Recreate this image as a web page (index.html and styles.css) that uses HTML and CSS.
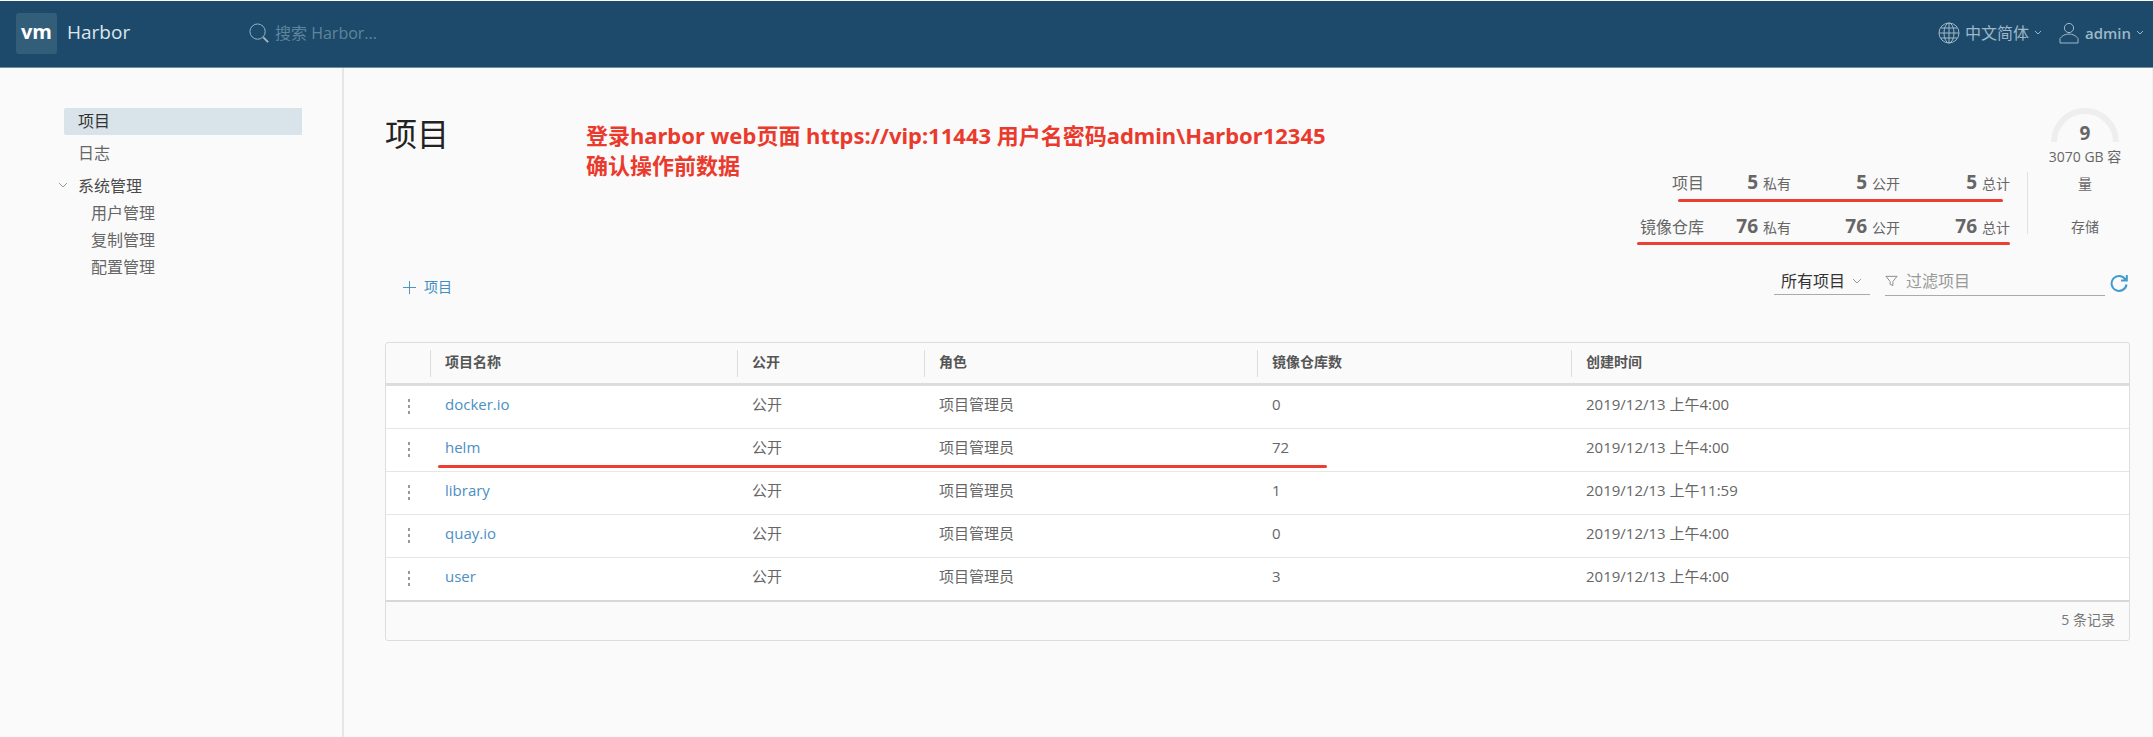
FILE: index.html
```html
<!DOCTYPE html>
<html lang="zh-CN">
<head>
<meta charset="utf-8">
<title>Harbor</title>
<link rel="stylesheet" href="styles.css">
</head>
<body>
<header class="header">
  <a class="brand" href="#"><span class="logo">vm</span><span class="brand-name">Harbor</span></a>
  <form class="search">
    <svg class="search-icon" viewBox="0 0 22 22" aria-hidden="true"><circle cx="9" cy="9" r="8"/><path d="M15 15l5 5" stroke-width="2"/></svg>
    <input class="search-input" type="search" placeholder="搜索 Harbor..." aria-label="搜索 Harbor">
  </form>
  <div class="header-actions">
    <button class="header-button" type="button">
      <svg class="header-icon" viewBox="0 0 22 22" aria-hidden="true"><circle cx="11" cy="11" r="10"/><ellipse cx="11" cy="11" rx="5" ry="10"/><path d="M11 1v20M1 11h20M3 6h16M3 16h16"/></svg>
      <span>中文简体</span>
      <svg class="caret" viewBox="0 0 8 6" aria-hidden="true"><path d="M1 1l3 3 3-3"/></svg>
    </button>
    <button class="header-button" type="button">
      <svg class="header-icon" viewBox="0 0 22 22" aria-hidden="true"><circle cx="11" cy="6" r="4.6"/><path d="M2 21v-4.500c2-3 5.500-4.500 9-4.500s7 1.500 9 4.500v4.500z"/></svg>
      <span class="user-name">admin</span>
      <svg class="caret" viewBox="0 0 8 6" aria-hidden="true"><path d="M1 1l3 3 3-3"/></svg>
    </button>
  </div>
</header>
<div class="layout">
  <nav class="sidebar">
    <a class="nav-item nav-active" href="#">项目</a>
    <a class="nav-item" href="#">日志</a>
    <div class="nav-group">
      <button class="nav-toggle" type="button"><svg class="nav-caret" viewBox="0 0 10 7" aria-hidden="true"><path d="M1 1l4 4 4-4"/></svg>系统管理</button>
      <a class="nav-sub" href="#">用户管理</a>
      <a class="nav-sub" href="#">复制管理</a>
      <a class="nav-sub" href="#">配置管理</a>
    </div>
  </nav>
  <main class="content">
    <div class="summary">
      <h1 class="title">项目</h1>
      <p class="note">登录harbor web页面 https://vip:11443 用户名密码admin\Harbor12345<br>确认操作前数据</p>
      <div class="stats">
        <div class="stat-row">
          <span class="stat-label">项目</span>
          <span class="stat"><b>5</b>私有</span>
          <span class="stat"><b>5</b>公开</span>
          <span class="stat"><b>5</b>总计</span>
          <span class="mark mark-projects"></span>
        </div>
        <div class="stat-row">
          <span class="stat-label">镜像仓库</span>
          <span class="stat"><b>76</b>私有</span>
          <span class="stat"><b>76</b>公开</span>
          <span class="stat"><b>76</b>总计</span>
          <span class="mark mark-repos"></span>
        </div>
      </div>
      <div class="divider"></div>
      <div class="storage">
        <div class="gauge">
          <svg class="gauge-arc" viewBox="0 0 68 34" aria-hidden="true"><path d="M3 34a31 31 0 0 1 62 0"/></svg>
          <b class="gauge-value">9</b>
        </div>
        <div class="capacity">3070 GB 容量</div>
        <div class="storage-label">存储</div>
      </div>
    </div>
    <div class="toolbar">
      <button class="add" type="button"><svg class="plus" viewBox="0 0 14 14" aria-hidden="true"><path d="M7 0v14M0 7h14"/></svg>项目</button>
      <div class="filters">
        <div class="select-wrap">
          <select class="select" aria-label="项目类型"><option>所有项目</option></select>
          <svg class="select-caret" viewBox="0 0 10 7" aria-hidden="true"><path d="M1 1l4 4 4-4"/></svg>
        </div>
        <div class="filter">
          <svg class="funnel" viewBox="0 0 14 12" aria-hidden="true"><path d="M1 1h12L8.500 6.500V11L5.500 9.500v-3z"/></svg>
          <input class="filter-input" type="text" placeholder="过滤项目" aria-label="过滤项目">
        </div>
        <button class="refresh" type="button" aria-label="刷新"><svg class="refresh-icon" viewBox="0 0 18 18" aria-hidden="true"><path d="M15.500 5.500A7.500 7.500 0 1 0 16.500 10.500M11 6.500h5.800V1"/></svg></button>
      </div>
    </div>
    <div class="datagrid">
      <table class="table">
        <colgroup><col class="c-menu"><col class="c-name"><col class="c-public"><col class="c-role"><col class="c-repos"><col class="c-time"></colgroup>
        <thead>
          <tr><th></th><th>项目名称</th><th>公开</th><th>角色</th><th>镜像仓库数</th><th>创建时间</th></tr>
        </thead>
        <tbody>
          <tr><td><button class="kebab" type="button" aria-label="操作"><i></i><i></i><i></i></button></td><td><a href="#">docker.io</a></td><td>公开</td><td>项目管理员</td><td>0</td><td>2019/12/13 上午4:00</td></tr>
          <tr><td><button class="kebab" type="button" aria-label="操作"><i></i><i></i><i></i></button></td><td><a href="#">helm</a></td><td>公开</td><td>项目管理员</td><td>72</td><td>2019/12/13 上午4:00</td></tr>
          <tr><td><button class="kebab" type="button" aria-label="操作"><i></i><i></i><i></i></button></td><td><a href="#">library</a></td><td>公开</td><td>项目管理员</td><td>1</td><td>2019/12/13 上午11:59</td></tr>
          <tr><td><button class="kebab" type="button" aria-label="操作"><i></i><i></i><i></i></button></td><td><a href="#">quay.io</a></td><td>公开</td><td>项目管理员</td><td>0</td><td>2019/12/13 上午4:00</td></tr>
          <tr><td><button class="kebab" type="button" aria-label="操作"><i></i><i></i><i></i></button></td><td><a href="#">user</a></td><td>公开</td><td>项目管理员</td><td>3</td><td>2019/12/13 上午4:00</td></tr>
        </tbody>
      </table>
      <div class="grid-footer">5 条记录</div>
      <span class="mark mark-helm"></span>
    </div>
  </main>
</div>
</body>
</html>
```
FILE: styles.css
```css
* { box-sizing: border-box; }
body {
  margin: 0;
  min-height: 100vh;
  display: flex;
  flex-direction: column;
  background: #fafafa;
  color: #666;
  font: 14px/20px "Open Sans", "Noto Sans CJK SC", sans-serif;
}
button, input, select {
  font: inherit;
  color: inherit;
  border: 0;
  padding: 0;
  margin: 0;
  background: none;
  outline: 0;
}
a { text-decoration: none; color: inherit; }
svg { fill: none; stroke: currentColor; flex: none; display: block; }

.header {
  display: flex;
  align-items: center;
  height: 67px;
  margin-top: 1px;
  padding: 0 9px 2px 16px;
  background: #1d4a6b;
  border-bottom: 1px solid #6f8fa5;
  color: #9db8c6;
}
.brand { display: flex; align-items: center; gap: 10px; width: 233px; }
.logo {
  width: 41px;
  height: 41px;
  border-radius: 3px;
  background: #335e7a;
  color: #fff;
  font-size: 20px;
  font-weight: 700;
  line-height: 38px;
  text-align: center;
}
.brand-name { color: #dce6ec; font-size: 19px; line-height: 24px; padding-bottom: 2px; }
.search { display: flex; align-items: center; gap: 5px; flex: 1; }
.search-icon { width: 21px; height: 21px; }
.search-input { width: 240px; font-size: 16px; }
.search-input::placeholder { color: #5f859c; opacity: 1; }
.header-actions { display: flex; gap: 16px; }
.header-button { display: flex; align-items: center; gap: 5px; font-size: 16px; }
.header-icon { width: 22px; height: 22px; }
.user-name { font-size: 15px; font-weight: 600; }
.caret { width: 8px; height: 6px; }

.layout { display: flex; flex: 1; }
.sidebar {
  width: 344px;
  flex: none;
  padding: 40px 40px 0 64px;
  border-right: 2px solid #e6e6e6;
  font-size: 16px;
}
.nav-item { display: block; height: 27px; line-height: 27px; padding-left: 14px; margin-bottom: 5px; }
.nav-active { background: #d9e3ea; color: #333; border-radius: 2px 0 0 2px; }
.nav-group { display: flex; flex-direction: column; align-items: flex-start; }
.nav-toggle { display: flex; align-items: center; gap: 10px; height: 27px; margin: 0 0 1px -6px; color: #4a4a4a; }
.nav-caret { width: 10px; height: 7px; color: #999; }
.nav-sub { height: 27px; line-height: 27px; padding-left: 27px; }

.content { flex: 1; min-width: 0; padding: 40px 22px 0 41px; border-right: 1px solid #f0f0f0; }
.summary { display: flex; align-items: flex-start; }
.title { margin: 0; width: 201px; color: #222; font-size: 32px; font-weight: 400; line-height: 52px; }
.note { margin: 12px 0 0; flex: 1; color: #ea3a2d; font-family: "Noto Sans", "Noto Sans CJK SC", sans-serif; font-size: 22px; font-weight: 700; line-height: 30px; }
.mark { position: absolute; height: 3px; border-radius: 2px; background: #ee3e33; }
.stats { margin-top: 53px; }
.stat-row { position: relative; display: grid; grid-template-columns: 64px 87px 109px 110px; height: 44px; align-items: center; text-align: right; }
.stat-label { font-size: 16px; }
.stat b { margin-right: 5px; font-size: 19px; font-weight: 700; }
.mark-projects { left: 38px; right: 7px; top: 38px; }
.mark-repos { left: -3px; right: 0; top: 37px; }
.divider { width: 1px; height: 62px; margin: 64px 15px 0 17px; background: #e3e3e3; }
.storage { width: 84px; margin-right: 3px; text-align: center; line-height: 27px; }
.gauge { position: relative; width: 68px; height: 35px; margin: 0 auto; }
.gauge-arc { width: 68px; height: 34px; color: #eee; stroke-width: 6; }
.gauge-value { position: absolute; left: 0; right: 0; top: 12px; font-size: 19px; font-weight: 700; }
.storage-label { margin-top: 16px; }

.toolbar { display: flex; align-items: flex-start; justify-content: space-between; height: 93px; padding: 18px 2px 0 18px; }
.add { display: flex; align-items: center; gap: 8px; height: 40px; color: #3f8fc2; }
.plus { width: 13px; height: 13px; }
.filters { display: flex; align-items: flex-start; }
.select-wrap { position: relative; width: 96px; height: 28px; border-bottom: 1px solid #aaa; }
.select { appearance: none; width: 100%; height: 27px; padding-left: 7px; color: #333; font-size: 16px; }
.select-caret { position: absolute; right: 8px; top: 11px; width: 10px; height: 7px; color: #999; pointer-events: none; }
.filter { display: flex; align-items: center; gap: 8px; width: 220px; height: 29px; margin-left: 15px; border-bottom: 1px solid #aaa; color: #888; }
.funnel { width: 13px; height: 12px; }
.filter-input { flex: 1; min-width: 0; height: 28px; font-size: 16px; }
.filter-input::placeholder { color: #999; opacity: 1; }
.refresh { margin: 7px 0 0 5px; color: #3f9ace; }
.refresh-icon { width: 18px; height: 18px; stroke-width: 2; }

.datagrid { position: relative; border: 1px solid #ddd; border-radius: 3px; }
.table { width: 100%; border-collapse: separate; border-spacing: 0; table-layout: fixed; }
.c-menu { width: 44px; }
.c-name { width: 307px; }
.c-public { width: 187px; }
.c-role { width: 333px; }
.c-repos { width: 314px; }
.table th, .table td { padding: 0 0 0 15px; text-align: left; }
.table th { height: 43px; padding-bottom: 4px; border-bottom: 3px solid #ddd; color: #555; line-height: 27px; font-weight: 600; }
.table th + th { background: linear-gradient(#ddd, #ddd) 0 7px / 1px 27px no-repeat; }
.table td { height: 43px; padding-bottom: 6px; background: #fff; border-bottom: 1px solid #e6e6e6; font-size: 15px; }
.table tr:last-child td { height: 44px; border-bottom: 2px solid #d8d8d8; }
.table td a { color: #4b8fc4; }
.kebab { display: flex; flex-direction: column; gap: 3px; margin: 4px 0 0 7px; }
.kebab i { width: 2px; height: 3px; background: #999; }
.grid-footer { height: 38px; padding-right: 14px; line-height: 36px; text-align: right; color: #777; }
.mark-helm { left: 3%; width: 51%; top: 122px; }
```
